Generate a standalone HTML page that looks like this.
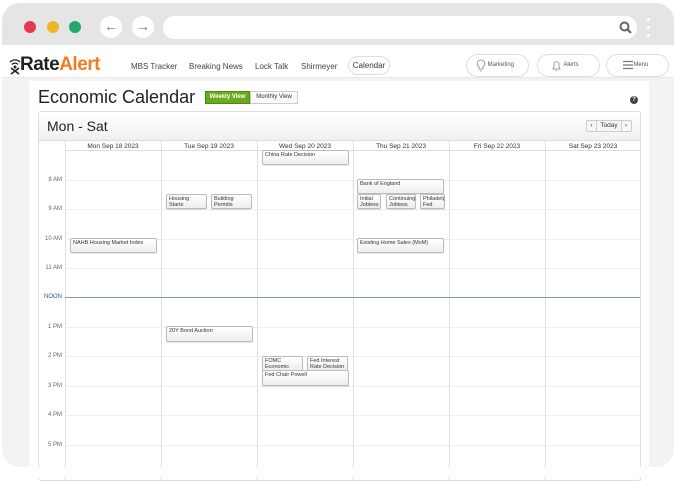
<!DOCTYPE html>
<html><head><style>
*{margin:0;padding:0;box-sizing:border-box}
body{width:676px;height:477px;background:#fff;font-family:"Liberation Sans",sans-serif;position:relative;overflow:hidden}
.a{position:absolute}
.frame{left:2px;top:3px;width:672px;height:464px;background:#f3f3f3;border-radius:18px;overflow:hidden}
.tb{left:0;top:0;width:672px;height:45px;background:#e5e5e5}
.nav{left:0;top:45px;width:672px;height:33px;background:#fff;border-bottom:1px solid #e8e8e8}
.nl{font-size:8px;color:#444;top:62px}
.pill{border:1px solid #ddd;border-radius:12px;background:#fff;font-size:6px;color:#555;text-align:center;line-height:21px}
.panel{left:29px;top:81px;width:620px;height:400px;background:#fff}
.ev{position:absolute;background:linear-gradient(#fff,#eee);border:1px solid #bbb;border-radius:2px;font-size:5.5px;color:#333;padding:1px 2px;line-height:6px;overflow:hidden;box-shadow:0 1px 1px rgba(0,0,0,.1)}
.hl{position:absolute;left:65px;width:575px;height:1px;background:#eee}
.tl{position:absolute;left:38px;width:24px;text-align:right;font-size:6px;color:#666}
.vl{position:absolute;top:141px;width:1px;height:340px;background:#ddd}
.dh{position:absolute;top:143px;width:96px;text-align:center;font-size:6.5px;color:#333}
</style></head><body>
<div class="a frame">
<div class="a tb"></div>
</div>
<div class="a" style="left:24px;top:21px;width:12px;height:12px;border-radius:50%;background:#e8384f"></div>
<div class="a" style="left:47px;top:21px;width:12px;height:12px;border-radius:50%;background:#f0b429"></div>
<div class="a" style="left:69px;top:21px;width:12px;height:12px;border-radius:50%;background:#22a86c"></div>
<div class="a" style="left:100px;top:16px;width:22px;height:22px;border-radius:50%;background:#fff;color:#777;font-size:14px;text-align:center;line-height:21px">←</div>
<div class="a" style="left:132px;top:16px;width:22px;height:22px;border-radius:50%;background:#fff;color:#777;font-size:14px;text-align:center;line-height:21px">→</div>
<div class="a" style="left:163px;top:16px;width:474px;height:23px;border-radius:12px;background:#fff"></div>
<svg class="a" style="left:619px;top:21px" width="14" height="14"><circle cx="5.5" cy="5.5" r="4" fill="none" stroke="#666" stroke-width="2"/><path d="M8.5 8.5L12 12" stroke="#666" stroke-width="2.2"/></svg>
<div class="a" style="left:647px;top:18px;width:3px;height:3px;background:#fff;border-radius:50%;box-shadow:0 8px 0 #fff,0 16px 0 #fff"></div>
<div class="a nav" style="left:2px"></div>
<svg class="a" style="left:8px;top:57px" width="14" height="18"><path d="M2 5a7 7 0 0 1 10 0M4 7.5a4 4 0 0 1 6 0" stroke="#222" stroke-width="1.3" fill="none"/><circle cx="7" cy="10" r="1.5" fill="#222"/><path d="M3 17L11 11M3 11L11 17" stroke="#222" stroke-width="1.6"/></svg>
<div class="a" style="left:20px;top:54px;font-size:19px;font-weight:bold;letter-spacing:-0.5px;color:#222">Rate<span style="color:#f47b20">Alert</span></div>
<div class="a nl" style="left:131px">MBS Tracker</div>
<div class="a nl" style="left:189px">Breaking News</div>
<div class="a nl" style="left:255px">Lock Talk</div>
<div class="a nl" style="left:301px">Shirmeyer</div>
<div class="a pill" style="left:348px;top:56px;width:42px;height:19px;line-height:18px;font-size:8px;color:#333;border-radius:10px">Calendar</div>
<div class="a pill" style="left:466px;top:54px;width:63px;height:23px;border-radius:12px">&nbsp;&nbsp;&nbsp;&nbsp;Marketing</div>
<div class="a pill" style="left:537px;top:54px;width:63px;height:23px;border-radius:12px">&nbsp;&nbsp;&nbsp;Alerts</div>
<div class="a pill" style="left:606px;top:54px;width:63px;height:23px;border-radius:12px">&nbsp;&nbsp;&nbsp;&nbsp;Menu</div>
<svg class="a" style="left:476px;top:59px" width="10" height="13"><path d="M5 1a3.5 3.5 0 0 0-2 6.5V10h4V7.5A3.5 3.5 0 0 0 5 1zM4 12h2" stroke="#888" fill="none" stroke-width=".8"/></svg>
<svg class="a" style="left:551px;top:59px" width="11" height="13"><path d="M2 10h7L8 8V5a2.5 2.5 0 0 0-5 0v3zM4.5 11.5h2" stroke="#888" fill="none" stroke-width=".8"/></svg>
<svg class="a" style="left:622px;top:60px" width="12" height="10"><path d="M1 1.5h10M1 5h10M1 8.5h10" stroke="#777" stroke-width="1.2"/></svg>
<div class="a panel"></div>
<div class="a" style="left:38px;top:87px;font-size:18px;color:#222">Economic Calendar</div>
<div class="a" style="left:205px;top:91px;width:45px;height:13px;background:#6aaa1e;border:1px solid #4d8a10;color:#fff;font-size:6px;text-align:center;line-height:11px;font-weight:bold">Weekly View</div>
<div class="a" style="left:250px;top:91px;width:48px;height:13px;background:#fafafa;border:1px solid #ccc;color:#333;font-size:6px;text-align:center;line-height:11px">Monthly View</div>
<div class="a" style="left:630px;top:96px;width:8px;height:8px;border-radius:50%;background:#444;color:#fff;font-size:6px;text-align:center;line-height:8px;font-weight:bold">?</div>
<div class="a" style="left:38px;top:111px;width:603px;height:370px;border:1px solid #ddd;border-radius:3px"></div>
<div class="a" style="left:39px;top:112px;width:601px;height:29px;background:linear-gradient(#fff,#f0f0f0);border-bottom:1px solid #ddd"></div>
<div class="a" style="left:47px;top:118px;font-size:14px;color:#222">Mon - Sat</div>
<div class="a" style="left:586px;top:120px;width:46px;height:12px;border:1px solid #ccc;border-radius:2px;background:#f6f6f6;font-size:6.5px;color:#333;line-height:10px"><span style="display:inline-block;width:10px;text-align:center;border-right:1px solid #ccc">‹</span><span style="display:inline-block;width:24px;text-align:center">Today</span><span style="display:inline-block;width:9px;text-align:center;border-left:1px solid #ccc">›</span></div>
<div class="vl" style="left:65px"></div><div class="vl" style="left:161px"></div><div class="vl" style="left:257px"></div><div class="vl" style="left:353px"></div><div class="vl" style="left:449px"></div><div class="vl" style="left:545px"></div><div class="vl" style="left:640px"></div>
<div class="a" style="left:65px;top:150px;width:575px;height:1px;background:#ddd"></div>
<div class="dh" style="left:65px">Mon Sep 18 2023</div><div class="dh" style="left:161px">Tue Sep 19 2023</div><div class="dh" style="left:257px">Wed Sep 20 2023</div><div class="dh" style="left:353px">Thu Sep 21 2023</div><div class="dh" style="left:449px">Fri Sep 22 2023</div><div class="dh" style="left:545px">Sat Sep 23 2023</div>
<div class="hl" style="top:180px"></div><div class="tl" style="top:177px">8 AM</div>
<div class="hl" style="top:209px"></div><div class="tl" style="top:206px">9 AM</div>
<div class="hl" style="top:239px"></div><div class="tl" style="top:236px">10 AM</div>
<div class="hl" style="top:268px"></div><div class="tl" style="top:265px">11 AM</div>
<div class="hl" style="top:297px;background:#7a9ab8"></div><div class="tl" style="top:294px;color:#2a5a90">NOON</div>
<div class="hl" style="top:327px"></div><div class="tl" style="top:324px">1 PM</div>
<div class="hl" style="top:356px"></div><div class="tl" style="top:353px">2 PM</div>
<div class="hl" style="top:386px"></div><div class="tl" style="top:383px">3 PM</div>
<div class="hl" style="top:415px"></div><div class="tl" style="top:412px">4 PM</div>
<div class="hl" style="top:445px"></div><div class="tl" style="top:442px">5 PM</div>
<div class="ev" style="left:262px;top:150px;width:87px;height:15px">China Rate Decision</div>
<div class="ev" style="left:357px;top:179px;width:87px;height:15px">Bank of England</div>
<div class="ev" style="left:357px;top:194px;width:24px;height:15px">Initial Jobless Claims</div>
<div class="ev" style="left:386px;top:194px;width:30px;height:15px">Continuing Jobless Claims</div>
<div class="ev" style="left:420px;top:194px;width:25px;height:15px">Philadelphia Fed Manufac</div>
<div class="ev" style="left:166px;top:194px;width:41px;height:15px">Housing Starts</div>
<div class="ev" style="left:211px;top:194px;width:41px;height:15px">Building Permits</div>
<div class="ev" style="left:70px;top:238px;width:87px;height:15px">NAHB Housing Market Index</div>
<div class="ev" style="left:357px;top:238px;width:87px;height:15px">Existing Home Sales (MoM)</div>
<div class="ev" style="left:166px;top:326px;width:87px;height:16px">20Y Bond Auction</div>
<div class="ev" style="left:262px;top:356px;width:41px;height:15px">FOMC Economic Projections</div>
<div class="ev" style="left:307px;top:356px;width:41px;height:15px">Fed Interest Rate Decision</div>
<div class="ev" style="left:262px;top:370px;width:87px;height:16px">Fed Chair Powell</div>
<div class="a" style="left:0;top:467px;width:676px;height:10px;background:#fff"></div>
</body></html>
